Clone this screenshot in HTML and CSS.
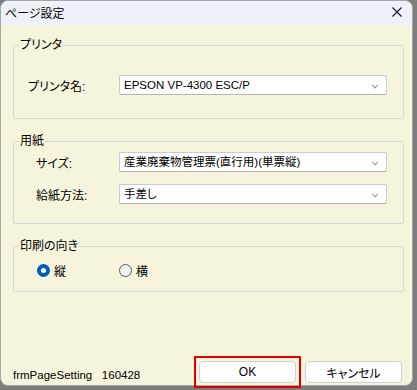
FILE: index.html
```html
<!DOCTYPE html>
<html lang="ja">
<head>
  <meta charset="UTF-8">
  <meta name="viewport" content="width=device-width, initial-scale=1.0">
  <title>ページ設定</title>
  <link rel="stylesheet" href="styles.css">
</head>
<body>
  <div class="window">
    <div class="titlebar">
      <span class="title">ページ設定</span>
      <svg class="close" width="10" height="10" viewBox="0 0 10 10">
        <path d="M0.5 0.5 L9.5 9.5 M9.5 0.5 L0.5 9.5" stroke="#1a1a1a" stroke-width="1.1" fill="none"/>
      </svg>
    </div>
    <div class="content">
      <fieldset class="group">
        <legend>プリンタ</legend>
        <div class="group-body printer-body">
          <div class="row">
            <label class="label label-wide">プリンタ名:</label>
            <div class="combo">EPSON VP-4300 ESC/P<span class="arrow"></span></div>
          </div>
        </div>
      </fieldset>

      <fieldset class="group spaced">
        <legend>用紙</legend>
        <div class="group-body paper-body">
          <div class="row">
            <label class="label">サイズ:</label>
            <div class="combo">産業廃棄物管理票(直行用)(単票縦)<span class="arrow"></span></div>
          </div>
          <div class="row">
            <label class="label">給紙方法:</label>
            <div class="combo">手差し<span class="arrow"></span></div>
          </div>
        </div>
      </fieldset>

      <fieldset class="group spaced">
        <legend>印刷の向き</legend>
        <div class="group-body orient-body">
          <label class="radio"><span class="dot checked"></span>縦</label>
          <label class="radio"><span class="dot"></span>横</label>
        </div>
      </fieldset>

      <div class="footer">
        <span class="formname">frmPageSetting&nbsp;&nbsp;&nbsp;160428</span>
        <div class="buttons">
          <span class="focus-ring"><button class="btn">OK</button></span>
          <button class="btn">キャンセル</button>
        </div>
      </div>
    </div>
  </div>
</body>
</html>
```

FILE: styles.css
```css
* {
  box-sizing: border-box;
}
html, body {
  margin: 0;
  padding: 0;
}
body {
  width: 417px;
  height: 390px;
  background-color: #7d7d7d;
  font-family: "Liberation Sans", "Noto Sans CJK JP", sans-serif;
  font-size: 12px;
  font-feature-settings: "palt";
  color: #000;
  overflow: hidden;
}
.window {
  width: 413px;
  height: 386px;
  border: 1px solid #a7a7a7;
  border-radius: 8px;
  background-color: #f6f4dc;
  display: flex;
  flex-direction: column;
}
.titlebar {
  height: 24px;
  flex: none;
  background-color: #eef1fa;
  border-radius: 7px 7px 0 0;
  display: flex;
  align-items: center;
  justify-content: space-between;
  padding: 0 10px 2px 4px;
}
.close {
  display: block;
}
.content {
  flex: 1;
  display: flex;
  flex-direction: column;
  padding: 13px 0 0 12px;
}
.group {
  margin: 0;
  padding: 0;
  width: 391px;
  min-width: 0;
  border: 1px solid #d8d8d2;
  border-radius: 2px;
}
.group.spaced {
  margin-top: 15px;
}
.group legend {
  padding: 0 1px;
  margin-left: 5px;
  line-height: 14px;
}
.printer-body {
  padding: 23px 15px 23px 14px;
}
.paper-body {
  padding: 4px 15px 19px 22px;
  display: flex;
  flex-direction: column;
  gap: 12px;
}
.orient-body {
  padding: 9px 15px 13px 23px;
  display: flex;
  align-items: center;
  height: 38px;
}
.row {
  display: flex;
  align-items: center;
}
.label {
  width: 83px;
}
.label-wide {
  width: 91px;
}
.combo {
  position: relative;
  width: 268px;
  height: 20px;
  background-color: #fff;
  border: 1px solid #cbcbcb;
  border-bottom-color: #b4b4b4;
  border-radius: 2px;
  padding: 0 0 0 4px;
  line-height: 18px;
  font-size: 11.5px;
}
.arrow {
  position: absolute;
  right: 8px;
  top: 6px;
  width: 6px;
  height: 6px;
  border-right: 1px solid #808080;
  border-bottom: 1px solid #808080;
  transform: rotate(45deg) scale(0.8, 0.8);
}
.radio {
  display: flex;
  align-items: center;
  gap: 4px;
  width: 82px;
}
.dot {
  width: 13px;
  height: 13px;
  border-radius: 50%;
  border: 1px solid #5c5c5c;
  background-color: #f0f0f0;
}
.dot.checked {
  border: 4px solid #005fb8;
  background-color: #fff;
}
.footer {
  margin-top: auto;
  width: 391px;
  height: 29px;
  display: flex;
  align-items: flex-start;
  justify-content: space-between;
  padding-right: 2px;
}
.formname {
  font-size: 11.5px;
  line-height: 14px;
  padding-top: 12px;
}
.buttons {
  display: flex;
  align-items: center;
  gap: 4px;
}
.focus-ring {
  display: block;
  border: 2px solid #e00000;
  padding: 3px;
}
.btn {
  display: block;
  width: 97px;
  height: 22px;
  background-color: #fdfdfd;
  border: 1px solid #d0d0d0;
  border-radius: 4px;
  font-family: "Liberation Sans", "Noto Sans CJK JP", sans-serif;
  font-feature-settings: "palt";
  font-size: 12px;
  color: #000;
  padding: 0;
}
```
